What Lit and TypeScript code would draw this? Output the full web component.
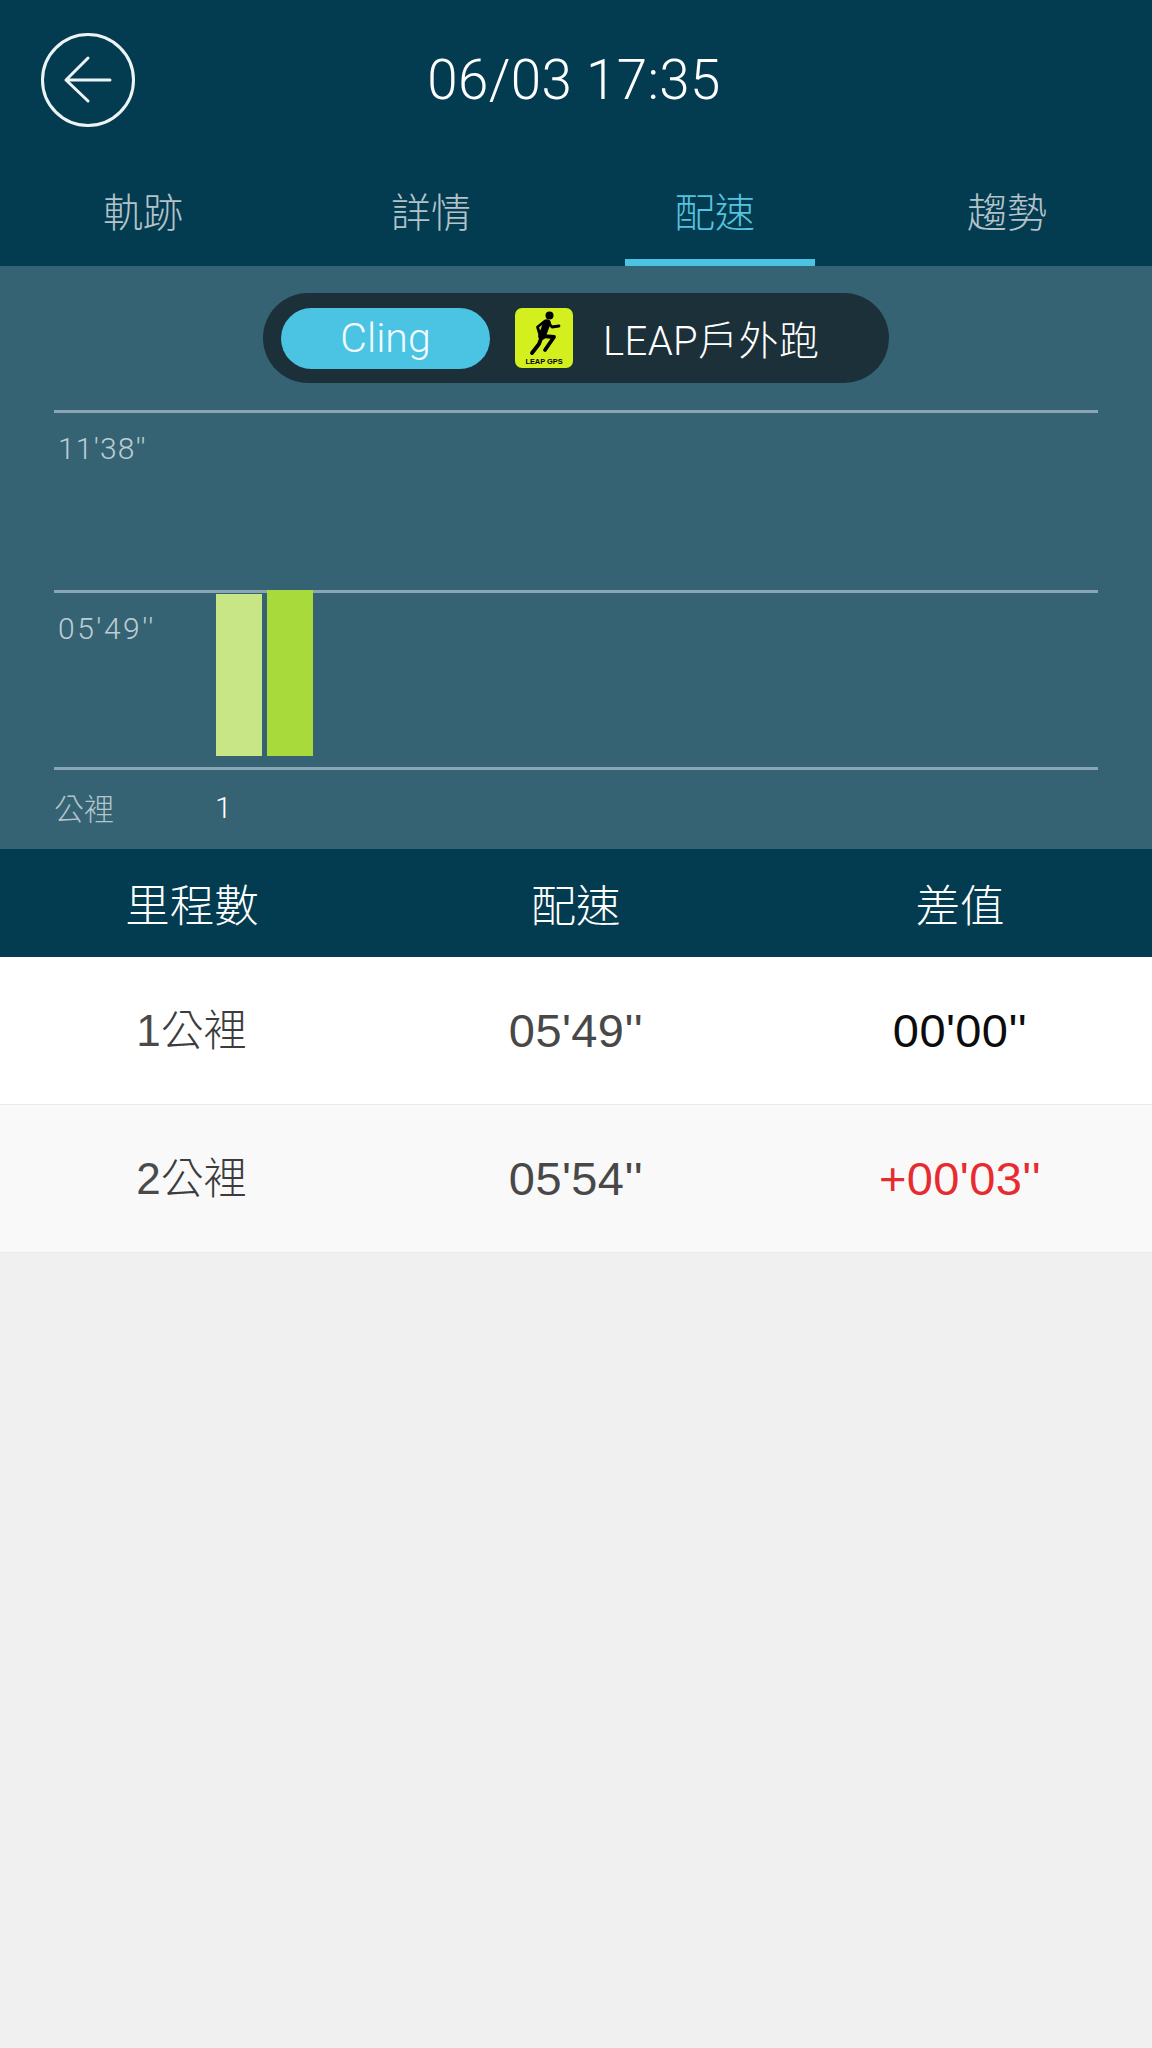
import { LitElement, html, css } from "lit";
import { customElement } from "lit/decorators.js";

const TABS = ["軌跡", "詳情", "配速", "趨勢"];
const ROWS = [
  { km: "1", pace: "05'49''", diff: "00'00''", tone: "even" },
  { km: "2", pace: "05'54''", diff: "+00'03''", tone: "up" },
];

@customElement("app-root")
export class AppRoot extends LitElement {
  static styles = css`
    :host {
      display: block;
      width: 1152px;
      height: 2048px;
      background: #f0f0f0;
      font-family: "Liberation Sans", "Noto Sans CJK TC", sans-serif;
      overflow: hidden;
    }
    .head {
      background: #033c50;
      height: 266px;
      display: flex;
      flex-direction: column;
    }
    .top {
      height: 160px;
      display: grid;
      grid-template-columns: 1fr auto 1fr;
      align-items: center;
      padding-left: 41px;
    }
    .back {
      width: 94px;
      height: 94px;
      display: block;
    }
    .title {
      font-family: Roboto, "Liberation Sans", sans-serif;
      font-weight: 300;
      font-size: 54.7px;
      color: #fff;
      margin-left: -45px;
      letter-spacing: 0.4px;
    }
    .tabs {
      flex: 1;
      display: grid;
      grid-template-columns: repeat(4, 1fr);
    }
    .tab {
      display: flex;
      flex-direction: column;
      align-items: center;
      justify-content: flex-end;
      color: #b4c2c9;
      font-size: 40px;
      font-weight: 300;
    }
    .tab span {
      line-height: 58px;
      margin: 0 2px 17px 0;
    }
    .tab i {
      display: block;
      width: 190px;
      height: 7px;
      background: transparent;
    }
    .tab.on {
      color: #56c3df;
    }
    .tab.on span {
      margin-right: 10px;
    }
    .tab.on i {
      background: #4bc4e4;
    }
    .chart {
      background: #366373;
      height: 583px;
      padding: 27px 54px 0;
      box-sizing: border-box;
      display: flex;
      flex-direction: column;
    }
    .switch {
      align-self: center;
      width: 626px;
      height: 90px;
      box-sizing: border-box;
      background: #1c3039;
      border-radius: 45px;
      padding: 15px 18px;
      display: flex;
      align-items: center;
      margin-bottom: 27px;
    }
    .cling {
      width: 209px;
      height: 61px;
      border-radius: 31px;
      background: #4bc4e4;
      color: #f2fbfe;
      font-size: 41px;
      text-align: center;
      line-height: 61px;
      font-family: Roboto, "Liberation Sans", sans-serif;
      font-weight: 300;
    }
    .logo {
      width: 58px;
      height: 60px;
      margin-left: 25px;
      display: block;
    }
    .logo text {
      font-family: "Liberation Sans", sans-serif;
      font-size: 7.4px;
      font-weight: 700;
    }
    .leap {
      color: #fff;
      font-size: 40px;
      margin-left: 30px;
      font-weight: 300;
      letter-spacing: 0.4px;
      font-family: Roboto, "Noto Sans CJK TC", sans-serif;
    }
    .band {
      border-top: 3px solid #8aa5b3;
      display: flex;
      box-sizing: border-box;
      height: 180px;
    }
    .band.b {
      border-bottom: 3px solid #8aa5b3;
    }
    .tick {
      color: #bccdd4;
      font-family: Roboto, "Liberation Sans", sans-serif;
      font-weight: 300;
      font-size: 30px;
      letter-spacing: 1.2px;
      padding: 18px 0 0 4px;
      line-height: 36px;
      width: 162px;
      box-sizing: border-box;
    }
    .band.b .tick {
      letter-spacing: 2.5px;
    }
    .bars {
      display: flex;
      gap: 5px;
      align-items: flex-end;
      height: 166px;
      margin-top: -3px;
    }
    .bar {
      width: 46px;
    }
    .bar.l {
      height: 162px;
      background: #c9e686;
    }
    .bar.d {
      height: 166px;
      background: #a9da3c;
    }
    .axis {
      display: flex;
      align-items: center;
      height: 79px;
      padding-bottom: 5px;
      box-sizing: border-box;
      font-size: 30px;
      color: #b3c5cd;
      font-weight: 300;
    }
    .axis b {
      width: 161px;
      font-weight: 300;
    }
    .axis span {
      color: #fff;
      font-family: Roboto, "Liberation Sans", sans-serif;
      font-weight: 300;
      font-size: 30px;
    }
    .grid {
      display: grid;
      grid-template-columns: repeat(3, 384px);
      align-items: center;
      justify-items: center;
    }
    .thead {
      background: #033c50;
      height: 108px;
      color: #fff;
      font-size: 44.5px;
      font-weight: 300;
      padding-bottom: 2px;
      box-sizing: border-box;
    }
    .row {
      height: 148px;
      box-sizing: border-box;
      background: #fff;
      border-bottom: 1px solid #eaeaea;
      color: #3c3c3c;
      font-size: 43px;
      font-weight: 300;
    }
    .row.alt {
      background: #f9f9f9;
    }
    .km {
      font-weight: 300;
      line-height: 60px;
      margin-left: -1px;
    }
    .km em {
      font-style: normal;
      font-weight: 400;
      font-size: 44px;
      color: #4a4a4a;
    }
    .num {
      font-size: 47px;
      font-family: "Liberation Sans", sans-serif;
      font-weight: 400;
      letter-spacing: 0.4px;
      color: #484848;
    }
    .num.even {
      color: #0c0c0c;
    }
    .num.up {
      color: #e62c30;
    }
  `;

  render() {
    return html`
      <section class="head">
        <div class="top">
          <svg class="back" viewBox="0 0 94 94" fill="none" stroke="#eef4f6" stroke-width="3" stroke-linecap="round" stroke-linejoin="round">
            <circle cx="47" cy="47" r="45.5"></circle>
            <path d="M25 47H69M47 25L25 47L47 68"></path>
          </svg>
          <div class="title">06/03 17:35</div>
          <div></div>
        </div>
        <nav class="tabs">
          ${TABS.map(
            (t, i) => html`<div class="tab ${i === 2 ? "on" : ""}"><span>${t}</span><i></i></div>`
          )}
        </nav>
      </section>
      <section class="chart">
        <div class="switch">
          <div class="cling">Cling</div>
          <svg class="logo" viewBox="0 0 58 60">
            <rect width="58" height="60" rx="7" fill="#d3f01e"></rect>
            <circle cx="34.5" cy="7.5" r="4" fill="#000"></circle>
            <g fill="none" stroke="#000" stroke-linecap="round" stroke-linejoin="round">
              <path d="M32 15L27 28" stroke-width="7.5"></path>
              <path d="M30 13L22.5 19L25 27" stroke-width="2.8"></path>
              <path d="M33 14L37 19L44 18" stroke-width="2.8"></path>
              <path d="M27 28L24 36L17 45" stroke-width="3.8"></path>
              <path d="M27 28L39 29L30 42" stroke-width="3.8"></path>
            </g>
            <text x="29" y="56" text-anchor="middle" fill="#000">LEAP GPS</text>
          </svg>
          <div class="leap">LEAP戶外跑</div>
        </div>
        <div class="band"><div class="tick">11'38''</div></div>
        <div class="band b">
          <div class="tick">05'49''</div>
          <div class="bars"><div class="bar l"></div><div class="bar d"></div></div>
        </div>
        <div class="axis"><b>公裡</b><span>1</span></div>
      </section>
      <div class="grid thead"><div>里程數</div><div>配速</div><div>差值</div></div>
      ${ROWS.map(
        (r, i) => html`
          <div class="grid row ${i === 1 ? "alt" : ""}">
            <div class="km"><em>${r.km}</em>公裡</div>
            <div class="num">${r.pace}</div>
            <div class="num ${r.tone}">${r.diff}</div>
          </div>
        `
      )}
    `;
  }
}
